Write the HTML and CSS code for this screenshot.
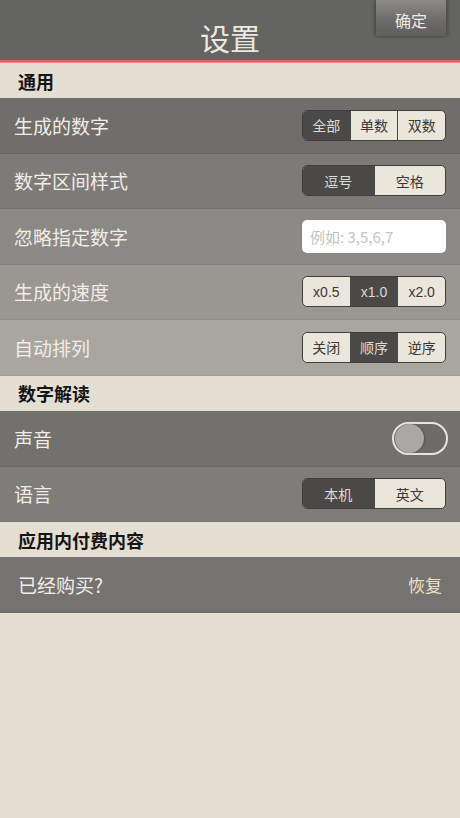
FILE: index.html
```html
<!DOCTYPE html>
<html lang="zh">
<head>
<meta charset="utf-8">
<link rel="stylesheet" href="styles.css">
</head>
<body>
<div class="app">
  <header class="topbar">
    <h1 class="title">设置</h1>
    <button class="confirm">确定</button>
  </header>
  <div class="redline"></div>

  <div class="section">通用</div>
  <div class="row r1">
    <span class="label">生成的数字</span>
    <div class="seg seg3">
      <span class="on">全部</span><span>单数</span><span>双数</span>
    </div>
  </div>
  <div class="row r2">
    <span class="label">数字区间样式</span>
    <div class="seg seg2">
      <span class="on">逗号</span><span>空格</span>
    </div>
  </div>
  <div class="row r3">
    <span class="label">忽略指定数字</span>
    <div class="input">例如: 3,5,6,7</div>
  </div>
  <div class="row r4">
    <span class="label">生成的速度</span>
    <div class="seg seg3 latin">
      <span>x0.5</span><span class="on">x1.0</span><span>x2.0</span>
    </div>
  </div>
  <div class="row r5">
    <span class="label">自动排列</span>
    <div class="seg seg3">
      <span>关闭</span><span class="on">顺序</span><span>逆序</span>
    </div>
  </div>

  <div class="section">数字解读</div>
  <div class="row r6">
    <span class="label">声音</span>
    <div class="toggle"><div class="knob"></div></div>
  </div>
  <div class="row r7">
    <span class="label">语言</span>
    <div class="seg seg2">
      <span class="on">本机</span><span>英文</span>
    </div>
  </div>

  <div class="section">应用内付费内容</div>
  <div class="row r8">
    <span class="label">已经购买?</span>
    <span class="restore">恢复</span>
  </div>
</div>
</body>
</html>
```

FILE: styles.css
```css
* { box-sizing: border-box; }
html, body {
  margin: 0;
  padding: 0;
  background: #e4ded3;
  font-family: "Noto Sans CJK SC", "Noto Sans", sans-serif;
}
.app {
  width: 460px;
  min-height: 818px;
  background: #e4ded3;
}
.topbar {
  height: 60px;
  background: #646463;
  display: flex;
  justify-content: center;
  align-items: flex-end;
  position: relative;
}
.title {
  margin: 0 0 5px;
  font-size: 30px;
  font-weight: 400;
  line-height: 36px;
  color: #ece8e0;
  letter-spacing: 0;
}
.confirm {
  position: absolute;
  right: 14px;
  top: 0;
  width: 70px;
  height: 36px;
  border: none;
  padding: 0;
  background: linear-gradient(#8d8b87, #6b6a68 60%, #5f5f5e);
  box-shadow: -2px 0 3px rgba(0,0,0,0.25), 2px 0 3px rgba(0,0,0,0.25);
  color: #eeebe4;
  font-family: inherit;
  font-size: 16px;
  line-height: 36px;
  padding-top: 2px;
}
.redline {
  height: 3px;
  background: #e06464;
  border-bottom: 1px solid #ea8a88;
}
.section {
  height: 35px;
  padding: 0 18px;
  display: flex;
  align-items: center;
  font-size: 18px;
  font-weight: 700;
  color: #151515;
  background: #e4ded3;
}
.section:first-of-type { height: 34px; }
.row {
  height: 55.5px;
  display: flex;
  align-items: center;
  justify-content: space-between;
  padding: 0 14px;
  border-bottom: 1px solid rgba(0,0,0,0.06);
}
.r1 { background: #6f6e6b; }
.r2 { background: #7d7b78; }
.r3 { background: #8b8985; }
.r4 { background: #9a9792; }
.r5 { background: #a9a6a0; }
.r6 { background: #72716e; height: 56px; }
.r7 { background: #7f7d7a; }
.r8 { background: #757371; height: 56px; padding: 0 18px; }
.label {
  font-size: 19px;
  color: #f1ede6;
}
.seg {
  display: flex;
  height: 31px;
  border: 1px solid #3f3e3c;
  border-radius: 5px;
  overflow: hidden;
  background: #ebe6dc;
}
.seg span {
  display: flex;
  align-items: center;
  justify-content: center;
  font-size: 14px;
  color: #3a3936;
  border-left: 1px solid #4a4946;
}
.seg span:first-child { border-left: none; }
.seg .on {
  background: #4a4947;
  color: #dedbd4;
}
.seg3 { width: 144px; }
.seg3 span { width: 48px; }
.seg3 span:first-child { width: 47px; }
.seg2 { width: 144px; }
.seg2 span { flex: 1; }
.latin span { font-family: "Liberation Sans", "Noto Sans", sans-serif; font-size: 14px; }
.input {
  width: 144px;
  height: 33px;
  background: #ffffff;
  border-radius: 5px;
  display: flex;
  align-items: center;
  padding-left: 8px;
  font-size: 15px;
  color: #c4c4c4;
}
.toggle {
  width: 56px;
  height: 33px;
  border: 2px solid #e9e6e0;
  border-radius: 17px;
  background: #6d6c6a;
  margin-right: -2px;
  display: flex;
  align-items: center;
  padding-left: 1px;
}
.knob {
  width: 29px;
  height: 29px;
  border-radius: 50%;
  background: #a9a8a5;
  box-shadow: 1px 0 2px rgba(0,0,0,0.25);
}
.restore {
  font-size: 17px;
  color: #ece0c4;
}
```
